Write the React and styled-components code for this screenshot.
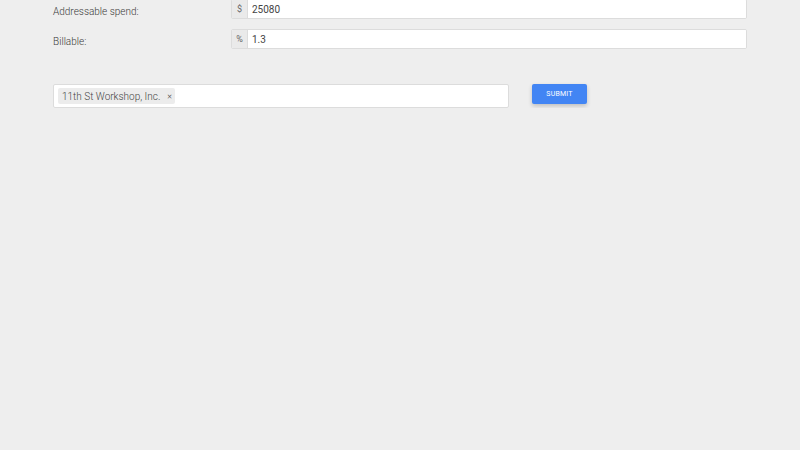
import React from "react";
import styled, { createGlobalStyle } from "styled-components";

const Global = createGlobalStyle`
  html, body { margin: 0; padding: 0; background: #eeeeee; }
  body { font-family: Roboto, "Noto Sans", sans-serif; }
`;

const Page = styled.div`
  padding: 0 53px;
  width: 800px;
  box-sizing: border-box;
`;

const FieldRow = styled.div`
  display: grid;
  grid-template-columns: 178px 516px;
  align-items: center;
  height: 20px;
  margin-top: ${(p) => p.$top}px;
`;

const Label = styled.label`
  font-size: 10px;
  font-weight: 300;
  color: #3a3a3a;
  padding-top: ${(p) => p.$shift}px;
`;

const InputGroup = styled.div`
  display: flex;
  height: 20px;
  box-sizing: border-box;
  border: 1px solid #dcdcdc;
  border-radius: 2px;
  background: #fff;
  overflow: hidden;
`;

const Addon = styled.span`
  width: 15px;
  display: flex;
  align-items: center;
  justify-content: center;
  background: #eaeaea;
  border-right: 1px solid #dcdcdc;
  font-size: 9px;
  color: #666;
`;

const Input = styled.input`
  flex: 1;
  border: none;
  outline: none;
  padding: 0 4px;
  font-family: Roboto, sans-serif;
  font-size: 10px;
  color: #444;
  background: #fff;
`;

const ActionRow = styled.div`
  display: flex;
  align-items: flex-start;
  gap: 23px;
  margin-top: 35px;
`;

const TagBox = styled.div`
  width: 456px;
  height: 24px;
  box-sizing: border-box;
  border: 1px solid #dcdcdc;
  border-radius: 2px;
  background: #fff;
  display: flex;
  align-items: center;
  padding: 0 4px;
`;

const Tag = styled.span`
  display: inline-flex;
  align-items: center;
  height: 16px;
  padding: 0 3px 0 4px;
  background: #ececec;
  border-radius: 2px;
  font-size: 10px;
  font-weight: 300;
  color: #444;
`;

const Remove = styled.span`
  margin-left: 7px;
  font-size: 9px;
  color: #444;
`;

const Submit = styled.button`
  width: 55px;
  height: 20px;
  border: none;
  border-radius: 2px;
  background: #4285f4;
  color: #fff;
  font-family: Roboto, sans-serif;
  font-size: 7px;
  letter-spacing: 0.2px;
  box-shadow: 0 2px 4px rgba(0, 0, 0, 0.2);
  padding: 0;
`;

export default function App() {
  return (
    <>
      <Global />
      <Page>
        <FieldRow $top={-1}>
          <Label $shift={5}>Addressable spend:</Label>
          <InputGroup>
            <Addon>$</Addon>
            <Input defaultValue="25080" />
          </InputGroup>
        </FieldRow>
        <FieldRow $top={10}>
          <Label $shift={4}>Billable:</Label>
          <InputGroup>
            <Addon>%</Addon>
            <Input defaultValue="1.3" />
          </InputGroup>
        </FieldRow>
        <ActionRow>
          <TagBox>
            <Tag>
              11th St Workshop, Inc.<Remove>×</Remove>
            </Tag>
          </TagBox>
          <Submit>SUBMIT</Submit>
        </ActionRow>
      </Page>
    </>
  );
}
